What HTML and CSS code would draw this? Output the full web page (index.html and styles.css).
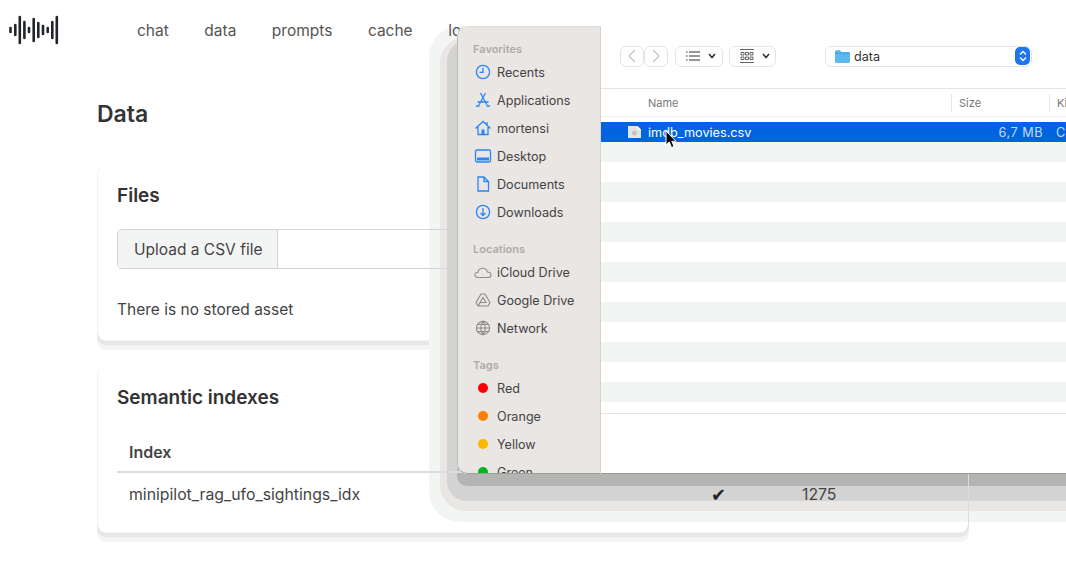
FILE: index.html
```html
<!DOCTYPE html>
<html>
    <head>
        <meta name="viewport" content="width=device-width, initial-scale=1">
        <link rel="stylesheet" href="styles.css">
    </head>
    <body>
        <div class="finder-shadow"></div>

        <div class="page">
            <header class="topbar">
                <svg class="logo" width="50" height="30" viewBox="0 0 50 30">
                    <g stroke="#212529" stroke-width="2.6" stroke-linecap="round">
                        <line x1="1.5" y1="13" x2="1.5" y2="17"/>
                        <line x1="6.3" y1="10" x2="6.3" y2="20"/>
                        <line x1="10.8" y1="2" x2="10.8" y2="28"/>
                        <line x1="15.4" y1="7" x2="15.4" y2="23"/>
                        <line x1="20" y1="13" x2="20" y2="17"/>
                        <line x1="24.7" y1="4" x2="24.7" y2="26"/>
                        <line x1="29.3" y1="8" x2="29.3" y2="22"/>
                        <line x1="34" y1="11" x2="34" y2="19"/>
                        <line x1="38.7" y1="13" x2="38.7" y2="17"/>
                        <line x1="43.3" y1="7" x2="43.3" y2="23"/>
                        <line x1="47.8" y1="2" x2="47.8" y2="28"/>
                    </g>
                </svg>
                <nav class="nav">
                    <a>chat</a>
                    <a>data</a>
                    <a>prompts</a>
                    <a>cache</a>
                    <a>logs</a>
                </nav>
            </header>

            <main class="content">
                <h1>Data</h1>

                <section class="card files">
                    <h2>Files</h2>
                    <div class="upload">
                        <span class="upload-btn">Upload a CSV file</span>
                    </div>
                    <p>There is no stored asset</p>
                </section>

                <section class="card indexes">
                    <h2>Semantic indexes</h2>
                    <div class="idx-row idx-head">
                        <span>Index</span>
                    </div>
                    <div class="idx-row">
                        <span>minipilot_rag_ufo_sightings_idx</span>
                        <span class="tick">✔</span>
                        <span>1275</span>
                    </div>
                </section>
            </main>
        </div>

        <div class="finder">
            <aside class="side">
                <div class="side-title first">Favorites</div>
                <div class="side-item">
                    <svg class="ico" viewBox="0 0 18 18"><circle cx="9" cy="9" r="6.6"/><path d="M9 4.8V9.4H5.6"/></svg>
                    Recents
                </div>
                <div class="side-item">
                    <svg class="ico" viewBox="0 0 18 18"><path d="M11.5 2L5 14M6.500 2L13 14M3.500 11H14.500M2 15H5.500M12.500 15H16"/></svg>
                    Applications
                </div>
                <div class="side-item">
                    <svg class="ico" viewBox="0 0 18 18"><path d="M1.500 9.500L9 2.500L16.500 9.500M4 8V15.500H14V8M13 3V6"/><rect class="solid" x="7.500" y="10.500" width="3" height="5"/></svg>
                    mortensi
                </div>
                <div class="side-item">
                    <svg class="ico" viewBox="0 0 18 18"><rect x="1.500" y="3" width="15" height="12" rx="1.500"/><rect class="solid" x="3" y="10.500" width="12" height="3"/></svg>
                    Desktop
                </div>
                <div class="side-item">
                    <svg class="ico" viewBox="0 0 18 18"><path d="M4 2H10L14.500 6.500V16H4ZM10 2V6.500H14.500"/></svg>
                    Documents
                </div>
                <div class="side-item">
                    <svg class="ico" viewBox="0 0 18 18"><circle cx="9" cy="9" r="6.600"/><path d="M9 5V12.500M6.500 10L9 12.500L11.500 10"/></svg>
                    Downloads
                </div>

                <div class="side-title">Locations</div>
                <div class="side-item">
                    <svg class="ico gray" viewBox="0 0 18 18"><path d="M4.500 14.500C1.500 14.500 .5 12.800 1 11.200C1.400 9.800 2.700 9.300 3.800 9.500C4.300 6.500 6.800 5 9 5.200C11.500 5.400 13 7.200 13.300 9C15.500 9 17 10.300 17 12C17 13.500 15.800 14.500 14 14.500Z"/></svg>
                    iCloud Drive
                </div>
                <div class="side-item">
                    <svg class="ico gray" viewBox="0 0 18 18"><path d="M7 3H11L16 11.500L14 15H4L2 11.500ZM9 6.500L12 11.500H6ZM4.500 14.500L6 11.500"/></svg>
                    Google Drive
                </div>
                <div class="side-item">
                    <svg class="ico gray" viewBox="0 0 18 18"><circle cx="9" cy="9" r="6.600"/><path d="M9 2.400C6 6 6 12 9 15.600C12 12 12 6 9 2.400ZM2.400 9H15.600M3.500 5.500H14.500M3.500 12.500H14.500"/></svg>
                    Network
                </div>

                <div class="side-title">Tags</div>
                <div class="side-item"><span class="dot red"></span>Red</div>
                <div class="side-item"><span class="dot orange"></span>Orange</div>
                <div class="side-item"><span class="dot yellow"></span>Yellow</div>
                <div class="side-item"><span class="dot green"></span>Green</div>
            </aside>

            <div class="pane">
                <div class="toolbar">
                    <div class="nav-btns">
                        <span class="tbtn arrow">
                            <svg width="10" height="14" viewBox="0 0 10 14"><path d="M8 1L2 7L8 13"/></svg>
                        </span>
                        <span class="tbtn arrow">
                            <svg width="10" height="14" viewBox="0 0 10 14"><path d="M2 1L8 7L2 13"/></svg>
                        </span>
                    </div>
                    <span class="tbtn view list-view">
                        <svg width="14" height="10" viewBox="0 0 14 10"><path d="M0 1H1.500M3 1H14M0 5H1.500M3 5H14M0 9H1.500M3 9H14"/></svg>
                        <svg class="chev" width="8" height="6" viewBox="0 0 8 6"><path d="M1 1L4 4.500L7 1"/></svg>
                    </span>
                    <span class="tbtn view grid-view">
                        <svg width="14" height="14" viewBox="0 0 14 14"><path d="M0 .5H14M0 13.500H14"/><path d="M1 3.500H4V6H1ZM5.500 3.500H8.500V6H5.500ZM10 3.500H13V6H10ZM1 8H4V10.500H1ZM5.500 8H8.500V10.500H5.500ZM10 8H13V10.500H10Z"/></svg>
                        <svg class="chev" width="8" height="6" viewBox="0 0 8 6"><path d="M1 1L4 4.500L7 1"/></svg>
                    </span>
                    <span class="path-pop">
                        <svg width="15" height="13" viewBox="0 0 15 13"><path d="M0 2C0 1 .7 .3 1.500 .3H5L6.500 2H13.500C14.400 2 15 2.600 15 3.500V11.500C15 12.400 14.400 13 13.500 13H1.500C.7 13 0 12.400 0 11.500Z" fill="#5fb8ec"/><path d="M0 3.300H15" stroke="#3a9bd9" stroke-width=".8"/></svg>
                        <span class="path-name">data</span>
                        <span class="stepper">
                            <svg width="8" height="12" viewBox="0 0 8 12"><path d="M1 4.500L4 1.500L7 4.500M1 7.500L4 10.500L7 7.500"/></svg>
                        </span>
                    </span>
                </div>

                <div class="cols">
                    <span>Name</span>
                    <span>Size</span>
                    <span>Kind</span>
                </div>

                <div class="rows">
                    <div class="row-selected">
                        <span class="fname">
                            <svg width="15" height="14" viewBox="0 0 15 14"><path d="M1 1H10.500L14 4.500V13H1Z" fill="#e4e4e2"/><path d="M10.500 1V4.500H14" fill="#fff"/><circle cx="7.500" cy="8" r="2.500" fill="#c4c4c2"/></svg>
                            imdb_movies.csv
                        </span>
                        <span class="fsize">6,7 MB</span>
                        <span class="fkind">CSV</span>
                    </div>
                </div>
            </div>
        </div>

        <svg class="cursor" width="12" height="19" viewBox="0 0 12 19">
            <path d="M1 1V15L4.300 12L6.500 17.500L9 16.500L6.800 11.300H11Z" fill="#000" stroke="#fff" stroke-width="1"/>
        </svg>
    </body>
</html>
```

FILE: styles.css
```css
html, body { height: 100%; margin: 0; padding: 0; overflow: hidden; background-color: #fff; }
body { position: relative; font-family: Inter, "Liberation Sans", sans-serif; font-size: 15.5px; color: #444; }
* { box-sizing: border-box; }

/* page: cards stay under the dialog shadow, their text stays over it */
.topbar { position: relative; z-index: 2; display: flex; align-items: center; height: 60px; padding-left: 9px; }
.logo { margin-top: -1px; }
.nav { display: flex; gap: 35.5px; margin-left: 78px; color: #555; }
.content { width: 872px; margin-left: 97px; }
h1 { margin: 0; padding-top: 40px; height: 105px; font-size: 23px; line-height: 28px; font-weight: 600; color: #333; }
h2 { position: relative; z-index: 2; margin: 0; font-size: 19px; line-height: 24px; font-weight: 600; color: #333; }
.card {
    position: relative;
    padding: 18px 19px 20px;
    background: #fff;
    border: 1px solid #f2f2f2;
    border-top-color: transparent;
    border-right-color: #e4e4e4;
    border-radius: 9px;
    box-shadow: 0 4px 0 #e9e6e3, 0 9px 0 #f3f4f4;
}
.card::after {
    content: "";
    position: absolute;
    z-index: 2;
    top: 8px;
    bottom: 8px;
    right: -1px;
    width: 1px;
    background: #dcdcdc;
}
.files { height: 176px; margin-bottom: 26px; }
.indexes { height: 166px; }
.upload {
    position: relative;
    z-index: 2;
    display: flex;
    height: 40px;
    margin-top: 21px;
    border: 1px solid #d4d4d4;
    border-radius: 5px;
}
.upload-btn {
    width: 160px;
    padding: 1px 16px 0;
    line-height: 38px;
    white-space: nowrap;
    background: #f3f4f4;
    border-right: 1px solid #d4d4d4;
    border-radius: 4px 0 0 4px;
}
.card p { position: relative; z-index: 2; margin: 29px 0 0; line-height: 24px; }
.idx-row {
    position: relative;
    z-index: 2;
    display: grid;
    grid-template-columns: 582px 91px 1fr;
    padding-left: 12px;
    height: 43px;
    align-items: center;
    font-size: 15.8px;
}
.idx-head { margin-top: 20px; padding-top: 2px; font-size: 16px; font-weight: 600; border-bottom: 2px solid #ddd; }
.tick { font-family: "DejaVu Sans", sans-serif; font-size: 18px; color: #222; }

/* finder dialog */
.finder-shadow {
    position: absolute;
    z-index: 1;
    left: 457px;
    top: 26px;
    width: 760px;
    height: 440px;
    border-radius: 10px;
    box-shadow: 0 20px 0 0 #b4b4b2, 0 25px 0 10px #d3d3d3, 0 28px 0 17px #e9e6e3, 0 28px 0 28px #f3f4f4;
}
.finder {
    position: absolute;
    z-index: 3;
    left: 457px;
    top: 26px;
    width: 760px;
    height: 448px;
    display: grid;
    grid-template-columns: 144px 1fr;
    overflow: hidden;
    background: #fff;
    border-radius: 10px 0 0 10px;
    font-size: 13px;
    color: #444;
}
.side {
    height: 448px;
    overflow: hidden;
    background: #e9e6e3;
    border: 1px solid #bdbdbb;
    border-top-color: #dcdcda;
    border-bottom-color: #9c9c9a;
    border-right-color: #d6d2cd;
    border-radius: 10px 0 0 10px;
}
.side-title { margin: 14px 0 0 15px; height: 18px; line-height: 18px; font-size: 11px; font-weight: 600; color: #aeacaa; }
.side-title.first { margin-top: 13px; }
.side-item { display: flex; align-items: center; height: 28px; font-size: 12.6px; }
.ico { width: 18px; height: 18px; margin: 0 5px 0 16px; fill: none; stroke: #2a85f7; stroke-width: 1.3; }
.ico .solid { fill: #2a85f7; stroke: none; }
.ico.gray { stroke: #8c8b89; stroke-width: 1.1; }
.dot { width: 10px; height: 10px; margin: 0 9px 0 20px; border-radius: 50%; }
.red { background: #fb0007; }
.orange { background: #fb8000; }
.yellow { background: #fbb800; }
.green { background: #00b81a; }

.pane { display: flex; flex-direction: column; height: 448px; border-bottom: 1px solid #9c9c9a; }
.toolbar { position: relative; display: flex; align-items: center; height: 63px; padding: 0 0 2px 19px; border-bottom: 1px solid #e5e5e5; }
.nav-btns { display: flex; }
.tbtn {
    display: flex;
    align-items: center;
    height: 21px;
    background: #fff;
    border: 1px solid #e4e4e4;
    border-radius: 6px;
}
.tbtn svg { fill: none; stroke: #333; stroke-width: 1.100; }
.arrow { justify-content: center; width: 24px; }
.arrow svg { stroke: #bdbdbd; }
.view { margin-left: 7px; padding-left: 10px; gap: 8px; }
.list-view { width: 48px; }
.grid-view { width: 47px; margin-left: 6px; }
.grid-view svg:first-child { stroke: #555; stroke-width: .9; }
.chev { stroke-width: 1.600 !important; }
.path-pop {
    display: flex;
    align-items: center;
    width: 207px;
    height: 21px;
    margin-left: 49px;
    padding-left: 9px;
    border: 1px solid #e4e4e4;
    border-radius: 6px;
}
.path-name { margin-left: 4px; font-size: 12.6px; color: #333; }
.stepper {
    display: flex;
    align-items: center;
    justify-content: center;
    width: 15px;
    height: 18px;
    margin-left: auto;
    margin-right: 1px;
    background: #1f75f0;
    border-radius: 5px;
}
.stepper svg { fill: none; stroke: #fff; stroke-width: 1.300; }

.cols {
    display: grid;
    grid-template-columns: 350px 98px 1fr;
    height: 28px;
    align-items: center;
    border-bottom: 1px solid #efefef;
    font-size: 11px;
    color: #777;
}
.cols span { height: 18px; line-height: 18px; padding-left: 7px; border-left: 1px solid #e5e5e5; }
.cols span:first-child { padding-left: 47px; border-left: 0; }
.rows {
    height: 297px;
    padding-top: 5px;
    border-bottom: 1px solid #e5e5e5;
    background: repeating-linear-gradient(#f3f5f4 0, #f3f5f4 20px, #fff 20px, #fff 40px) 0 25px no-repeat;
    background-size: 100% 260px;
}
.row-selected {
    display: grid;
    grid-template-columns: 350px 92px 1fr;
    height: 20px;
    align-items: center;
    background: #0064e1;
    color: #fff;
    font-size: 12.7px;
}
.fname { display: flex; align-items: center; gap: 6px; padding-left: 26px; }
.fsize { text-align: right; letter-spacing: .5px; color: #c6daf6; }
.fkind { padding-left: 13px; color: #c6daf6; }

.cursor { position: absolute; z-index: 4; left: 665px; top: 130px; }
```
